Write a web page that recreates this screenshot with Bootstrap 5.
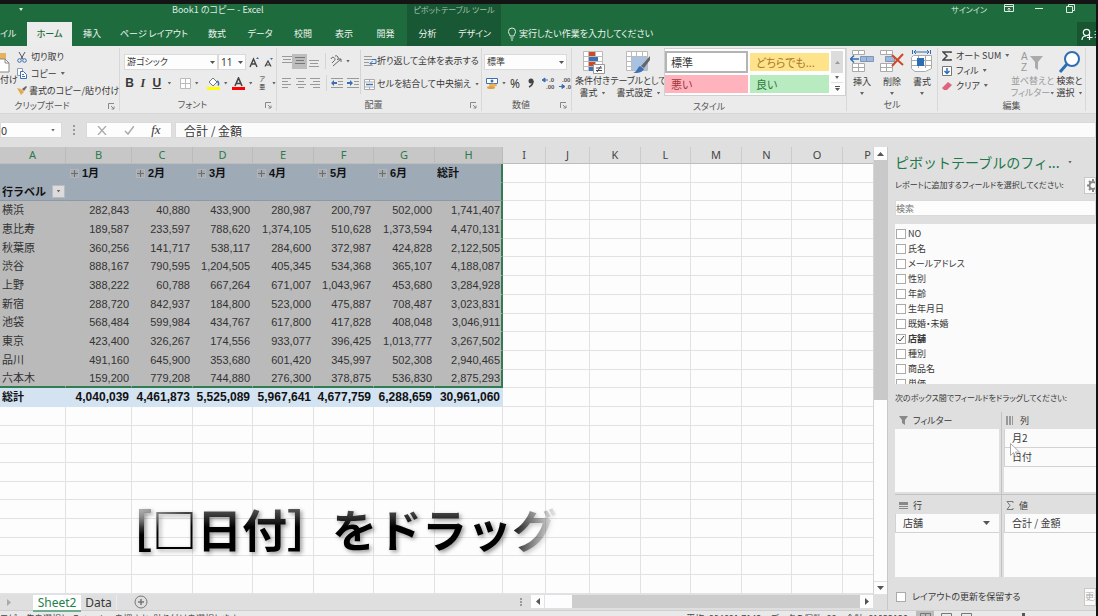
<!DOCTYPE html>
<html lang="ja">
<head>
<meta charset="utf-8">
<meta name="viewport" content="width=device-width, initial-scale=1">
<title>Book1 のコピー - Excel</title>
<link rel="stylesheet" href="https://cdn.jsdelivr.net/npm/bootstrap@5.3.0/dist/css/bootstrap.min.css">
<style>
:root{--ui:"Noto Sans CJK JP",sans-serif}
body{font:9px/12px var(--ui);font-feature-settings:"palt";color:#383838;background:#141414;height:100vh;overflow:hidden}
button,input,select{font:inherit;font-feature-settings:inherit;color:inherit;letter-spacing:inherit}
button{border:0;background:none;padding:0;white-space:nowrap}
svg{display:block;flex:none}
.app{border-top:4px solid #141414;border-right:2px solid #141414;background:#dfdfdf}
.titlebar{height:18px;background:#1e6c3d;color:#dfeae2}
.titlebar .doc{left:172px;top:0}
.titlebar a{font-size:8px}
.ctx{background:#195834;color:#a0c2ac}
.titlebar .ctx{left:407px;width:94px;height:18px;font-size:8px;white-space:nowrap}
.tabsrow{height:24px;background:#1e6c3d;color:#eff5f1}
.tabsrow a{color:inherit;text-decoration:none;text-align:center;line-height:24px}
.tabsrow a.on{background:#ececec;color:#1e6c3d;font-weight:500}
.tabsrow .ctx{color:#eff5f1}
.share{background:#175630;width:19px}
.ribbon{height:68px;background:#ebebeb;border-bottom:1px solid #d6d6d6}
.group{border-right:1px solid #d8d8d8;margin:2px 0;padding-top:2px}
.group .cap{height:13px;line-height:13px;color:#555;text-align:center;flex:none}
.tool{display:flex;align-items:center;justify-content:center}
.box{background:#fdfdfd;border:1px solid #dadada;height:16px;line-height:14px;border-radius:0;padding:0 2px;appearance:none;min-width:0}
select.box{background:#fdfdfd url("data:image/svg+xml,%3Csvg xmlns='http://www.w3.org/2000/svg' width='5' height='3'%3E%3Cpath d='M0 0h5L2.500 3z' fill='%23555'/%3E%3C/svg%3E") no-repeat right 2px center}
.car{width:4px;height:3px;background:#666;clip-path:polygon(0 0,100% 0,50% 100%);flex:none}
.sep{width:1px;height:16px;background:#d5d5d5}
.big{display:flex;flex-direction:column;align-items:center;line-height:12px}
.gallery{background:#fdfdfd;border:1px solid #d0d0d0;grid-template-columns:83px 79px 12px;grid-template-rows:22px 22px;column-gap:2px;font-size:11px}
.sty{text-align:left;padding:0 6px;margin:2px 0;line-height:18px}
.sty.std{border:2px solid #b4b4b4;margin:0;padding:0 4px;background:#fff}
.fbar{height:33px;padding:8px 0 9px;background:#dfdfdf}
.fbar .box{height:16px}
.fbar .fx{background:#fbfbfb;padding-left:8px;font-size:12px;font-feature-settings:normal;margin-left:3px}
.sheet{background:#fdfdfd}
table.cells{table-layout:fixed;width:893px;height:100%;border-collapse:separate;border-spacing:0;font:11px/14px "Liberation Sans",var(--ui);color:#333}
.cells tbody tr{height:18px}
.cells td,.cells th{padding:0 2px;border-right:1px solid #e2e2e2;border-bottom:1px solid #e2e2e2;white-space:nowrap;overflow:hidden;font-weight:400}
.cells thead th{height:17px;background:#dfdfdf;border-color:#cbcbcb;border-bottom-color:#bdbdbd;text-align:center;font:11px/14px "Noto Sans",sans-serif;color:#444}
.cells thead th.sel{background:#c7c7c7;color:#2b7a4b;border-right-color:#bbb}
.cells td.num{text-align:right}
.cells .hd{background:#9eaab5;border-color:#9eaab5;font-weight:700;color:#111;text-align:left}
.cells .hd2{border-bottom-color:#8b9aa9}
.cells .body{background:#bababa;border-color:#bababa;text-align:left}
.cells td.body.num{text-align:right}
.cells .last{border-right:2px solid #2f7d50;padding-right:1px}
.cells .edge{border-bottom:2px solid #2f7d50}
.cells .tot{background:#d3e3f2;border-color:#d3e3f2;color:#111;font-weight:700;text-align:left}
.cells td.tot{font-size:12px;text-align:right}
.plus{display:inline-block;width:9px;height:9px;margin:0 3px 0 2px;border:1px solid #bbb;background:linear-gradient(#555,#555) center/7px 1px no-repeat,linear-gradient(#555,#555) center/1px 7px no-repeat,#aaa;vertical-align:-1px;opacity:.7}
.drop{display:inline-flex;width:13px;height:13px;background:#dcdcdc;border:1px solid #bbb;align-items:center;justify-content:center;float:right;margin-right:-2px}
.caption{left:107px;top:354px;font:700 45px/56px var(--ui);font-feature-settings:normal;white-space:nowrap;color:transparent;background:radial-gradient(ellipse 50px 26px at 30px 8px,#b5b5b5,transparent),linear-gradient(#555 8px,#000 26px);-webkit-background-clip:text;background-clip:text;filter:drop-shadow(2px 2px 2px #0006);-webkit-mask-image:linear-gradient(100deg,#000 400px,transparent 450px);mask-image:linear-gradient(100deg,#000 400px,transparent 450px)}
.vbar{width:14px;background:#c9c9c9;border-left:1px solid #d5d5d5}
.vbar button,.hbar button{background:#fdfdfd;width:13px;height:13px}
.pane{flex:0 0 209px;border-left:1px solid #c8c8c8;background:#dfdfdf;padding:3px 0 0 7px}
.pane h2{font:14px/24px var(--ui);color:#21784a;margin:0;white-space:nowrap}
.hint{font-size:8px;white-space:nowrap}
.gear{width:12px;height:17px;background:#fafafa;border:1px solid #c8c8c8;overflow:hidden}
.fields{background:#fbfbfb;height:160px;overflow:hidden;padding-top:2px}
.fields label,.defer{display:flex;align-items:center;height:15px;gap:2px}
.chk{appearance:none;width:10px;height:10px;margin:0 0 0 1px;border:1px solid #aaa;background:#fff;flex:none}
.chk:checked{background:url("data:image/svg+xml,%3Csvg xmlns='http://www.w3.org/2000/svg' viewBox='0 0 8 8'%3E%3Cpath d='M1 4l2 2 4-5' fill='none' stroke='%23444'/%3E%3C/svg%3E")}
.zones{grid-template-columns:107px 1fr;grid-template-rows:83px 82px}
.zone{border-right:1px solid #c2c2c2;display:flex;flex-direction:column}
.zone .zh{height:17px;display:flex;align-items:center;gap:5px;padding-left:4px}
.zone .zb{background:#fbfbfb;flex:1;margin-right:2px}
.zone:nth-child(even){border-right:0}
.zone:nth-child(even) .zb{margin:0 0 0 2px}
.zone .it{display:flex;align-items:center;justify-content:space-between;width:100%;height:19px;padding:0 9px 0 7px;border-bottom:1px solid #d2d2d2;border-left:1px solid #d2d2d2;font-size:10px}
.zone.upper{border-bottom:1px solid #c2c2c2;padding-bottom:2px}
.zone.lower{padding-top:2px}
.foot{margin-top:11px}
.cursor{left:122px;top:296px}
.tabs{height:16px;background:#dfdfdf;font:12px/15px "Noto Sans",sans-serif}
.tabs .act{background:#fff;color:#1f8049;border-bottom:2px solid #6fae8a}
.hbar{width:342px;background:#cdcdcd;height:13px}
.status{height:6px;overflow:hidden;border-top:1px solid #cfcfcf;background:#e9e9e9;color:#444;line-height:16px}
</style>
</head>
<body>
<div class="app d-flex flex-column vh-100 overflow-hidden">
  <header>
    <div class="titlebar position-relative d-flex justify-content-end">
      <span class="car position-absolute" style="left:19px;top:4px;background:#dfeae2"></span>
      <span class="doc position-absolute">Book1 のコピー - Excel</span>
      <span class="ctx position-absolute text-center">ピボットテーブル ツール</span>
      <div class="d-flex align-items-start gap-3 pe-3">
        <a href="#" class="text-reset text-decoration-none">サインイン</a>
        <button aria-label="リボンの表示オプション"><svg width="12" height="10" fill="none" stroke="#dfeae2"><path d="M1.500.500h9v7h-9zM1.500 2.500h9M6 7V4M4.500 5.500L6 4l1.500 1.500"/></svg></button>
        <button class="ms-1" aria-label="最小化"><svg width="9" height="9" stroke="#dfeae2"><path d="M0 4.500h8"/></svg></button>
        <button class="ms-1 me-1" aria-label="元に戻す"><svg width="12" height="10" fill="none" stroke="#dfeae2"><path d="M2.500 2.500h6v6h-6zM4.500 2.500v-2h6v6h-2"/></svg></button>
      </div>
    </div>
    <nav class="tabsrow d-flex">
      <a href="#" style="width:27px" class="text-start">イル</a>
      <a href="#" class="on" style="width:45px">ホーム</a>
      <a href="#" style="width:40px">挿入</a>
      <a href="#" style="width:84px">ページ レイアウト</a>
      <a href="#" style="width:42px">数式</a>
      <a href="#" style="width:44px">データ</a>
      <a href="#" style="width:42px">校閲</a>
      <a href="#" style="width:40px">表示</a>
      <a href="#" style="width:43px">開発</a>
      <a href="#" class="ctx" style="width:41px">分析</a>
      <a href="#" class="ctx" style="width:53px">デザイン</a>
      <a href="#" class="d-flex align-items-center ms-1"><svg width="14" height="14" fill="none" stroke="#dfeae2"><path d="M5 9C5 7 3.500 7 3.500 4.500a3.500 3.500 0 0 1 7 0C10.500 7 9 7 9 9zM5.500 11h3M6 13h2"/></svg>実行したい作業を入力してください</a>
      <button class="share ms-auto d-flex align-items-center overflow-hidden text-reset ps-1"><svg width="13" height="13" fill="none" stroke="#fff" stroke-width="1.200"><circle cx="5.500" cy="4.500" r="3.200"/><path d="M1 12c0-3 2-4 4-4M8.500 7v5M6 9.500h5.500"/></svg>共有</button>
    </nav>
    <div class="ribbon d-flex">
      <section class="group d-flex flex-column" style="width:120px;padding-top:1px">
        <div class="d-flex flex-fill">
          <button class="big" style="width:17px;align-items:flex-start;padding-top:3px" aria-label="貼り付け"><svg width="12" height="22"><path d="M0 1h6v8H0z" fill="#e8b25c"/><path d="M-1 7h6l4 4v9h-10z" fill="#fff" stroke="#888"/><path d="M5 7v4h4" fill="none" stroke="#888"/></svg>付け</button>
          <div class="d-flex flex-column">
            <button class="tool justify-content-start gap-1" style="height:16px"><svg width="10" height="11" fill="none"><path d="M2 0l4 7M8 0L4 7" stroke="#555"/><circle cx="2.500" cy="8.500" r="1.800" stroke="#3c6fb4"/><circle cx="7.500" cy="8.500" r="1.800" stroke="#3c6fb4"/></svg>切り取り</button>
            <button class="tool justify-content-start gap-1" style="height:17px"><svg width="10" height="11" fill="#fff"><path d="M.500.500h5v7h-5z" stroke="#8a9bb0"/><path d="M3.500 3.500h3l3 3v4h-6z" stroke="#3c6fb4"/><path d="M5 6.500h2M5 8.500h3" stroke="#3c6fb4"/></svg>コピー<i class="car"></i></button>
            <button class="tool justify-content-start" style="height:17px"><svg width="12" height="11"><path d="M0 3l4 1 3 3-3 3z" fill="#e5a84b"/><path d="M5 4l4-3 1 1-3 4z" fill="#666"/></svg>書式のコピー/貼り付け</button>
          </div>
        </div>
        <div class="cap d-flex"><span class="flex-fill pe-4">クリップボード</span><svg class="mt-1 me-1" width="7" height="7" fill="none" stroke="#888"><path d="M.500 6V.500H6M3 3l3 3M6 3.500V6H3.500"/></svg></div>
      </section>
      <section class="group d-flex flex-column" style="width:157px">
        <div class="flex-fill ps-1">
          <div class="d-flex align-items-center mt-1" style="height:16px">
            <select class="box" style="width:94px" aria-label="フォント"><option>游ゴシック</option></select>
            <select class="box" style="width:28px;font:10px 'Noto Sans'" aria-label="サイズ"><option>11</option></select>
            <button class="tool" style="width:17px"><svg width="11" height="11"><path d="M1 10L4.500 2 8 10M2.500 7h4" fill="none" stroke="#444" stroke-width="1.400"/><path d="M7 2l1.500-2L10 2z" fill="#3c6fb4"/></svg></button>
            <button class="tool" style="width:12px"><svg width="10" height="10"><path d="M1 9.500L4 4l3 5.500M2 8h4" fill="none" stroke="#444" stroke-width="1.200"/><path d="M6 1h3L7.500 3z" fill="#3c6fb4"/></svg></button>
          </div>
          <div class="d-flex align-items-center" style="height:26px;font:700 12px 'Liberation Sans'">
            <button class="tool" style="width:12px">B</button>
            <button class="tool fst-italic" style="width:16px;font-family:'Liberation Serif'">I</button>
            <button class="tool text-decoration-underline" style="width:14px">U</button>
            <i class="car ms-1 me-2"></i>
            <button class="tool" style="width:12px"><svg width="11" height="11" fill="#fff" stroke="#bbb"><path d="M.500.500h10v10H.500zM5.500 0v11M0 5.500h11"/></svg></button>
            <i class="car mx-1"></i>
            <button class="tool ms-1" style="width:13px"><svg width="13" height="13"><path d="M6 1l4 4-4 4-4-4z" fill="#fff" stroke="#777"/><path d="M10 4c2 1 2 3 1 4.500" stroke="#3c6fb4" stroke-width="1.500" fill="none"/><path d="M0 10h13v3H0z" fill="#ff0"/></svg></button>
            <i class="car mx-1"></i>
            <button class="tool" style="width:13px"><svg width="13" height="13"><path d="M3 9l3.500-8L10 9M4 6.500h5" fill="none" stroke="#444" stroke-width="1.600"/><path d="M0 10h13v3H0z" fill="#f00"/></svg></button>
            <i class="car mx-1"></i>
            <button class="tool" style="width:12px;font:6px/8px var(--ui)">ア<br>亜</button>
            <i class="car ms-1"></i>
          </div>
        </div>
        <div class="cap d-flex"><span class="flex-fill">フォント</span><svg class="mt-1 me-1" width="7" height="7" fill="none" stroke="#888"><path d="M.500 6V.500H6M3 3l3 3M6 3.500V6H3.500"/></svg></div>
      </section>
      <section class="group d-flex flex-column" style="width:205px">
        <div class="d-flex flex-fill ps-1">
          <div style="width:79px">
            <div class="d-flex align-items-center" style="height:20px;margin-top:1px">
              <button class="tool" style="width:11px" aria-label="上揃え"><svg width="10" height="12" stroke="#999"><path d="M0 1.500h10M1 4.500h8M0 7.500h10"/></svg></button>
              <button class="tool" style="width:15px;height:15px;background:#bdbdbd" aria-label="上下中央"><svg width="10" height="12" stroke="#777"><path d="M0 2.500h10M1 5.500h8M0 8.500h10"/></svg></button>
              <button class="tool" style="width:14px" aria-label="下揃え"><svg width="10" height="12" stroke="#999"><path d="M0 5.500h10M1 8.500h8M0 11.500h10"/></svg></button>
              <i class="sep mx-1"></i>
              <button class="tool" style="width:12px" aria-label="方向"><svg width="12" height="12" fill="none" stroke="#666"><path d="M1 4a2 2 0 1 1 3 2L2 8M5 1a2 2 0 1 1 2 4M3 11l8-7M8 4h3v3"/></svg></button><i class="car ms-1"></i>
            </div>
            <div class="d-flex align-items-center" style="height:24px">
              <button class="tool" style="width:12px" aria-label="左揃え"><svg width="10" height="10" stroke="#999"><path d="M0 .500h9M0 3.500h6M0 6.500h9M0 9.500h6"/></svg></button>
              <button class="tool" style="width:15px" aria-label="中央揃え"><svg width="10" height="10" stroke="#999"><path d="M0 .500h10M2 3.500h6M0 6.500h10M2 9.500h6"/></svg></button>
              <button class="tool" style="width:14px" aria-label="右揃え"><svg width="10" height="10" stroke="#999"><path d="M0 .500h10M3 3.500h7M0 6.500h10M3 9.500h7"/></svg></button>
              <i class="sep mx-1"></i>
              <button class="tool" style="width:12px" aria-label="インデント減"><svg width="12" height="10"><path d="M0 .500h12M7 3.500h5M7 6.500h5M0 9.500h12" stroke="#999"/><path d="M0 5l3-3v2h3v2H3v2z" fill="#3c6fb4"/></svg></button>
              <button class="tool ms-1" style="width:12px" aria-label="インデント増"><svg width="12" height="10"><path d="M0 .500h12M7 3.500h5M7 6.500h5M0 9.500h12" stroke="#999"/><path d="M6 5L3 2v2H0v2h3v2z" fill="#3c6fb4"/></svg></button>
            </div>
          </div>
          <i class="sep" style="height:44px"></i>
          <div style="padding-left:3px">
            <button class="tool" style="height:20px;margin-top:1px"><svg width="13" height="11" fill="none"><path d="M0 .500h8M0 3.500h8M0 6.500h5M0 9.500h7" stroke="#999"/><path d="M8 3.500h4v4H6M8.500 5L6 7.500 8.500 10" stroke="#3c6fb4"/></svg>折り返して全体を表示する</button>
            <button class="tool" style="height:26px"><svg width="13" height="11"><path d="M.500.500h10v10H.500zM.500 3h10M.500 8h10M5.500 0v3M5.500 8v3" fill="#fff" stroke="#aaa"/><path d="M2 5.500h7" stroke="#3c6fb4" stroke-width="1.500"/></svg>セルを結合して中央揃え<i class="car ms-1"></i></button>
          </div>
        </div>
        <div class="cap d-flex"><span class="flex-fill">配置</span><svg class="mt-1 me-1" width="7" height="7" fill="none" stroke="#888"><path d="M.500 6V.500H6M3 3l3 3M6 3.500V6H3.500"/></svg></div>
      </section>
      <section class="group d-flex flex-column" style="width:90px">
        <div class="flex-fill ps-1">
          <select class="box d-block mt-1" style="width:83px;margin-left:-2px" aria-label="表示形式"><option>標準</option></select>
          <div class="d-flex align-items-center" style="height:26px">
            <button aria-label="通貨"><svg width="12" height="11"><path d="M.500.500h11v5H.500z" fill="#fff" stroke="#3c6fb4"/><circle cx="6" cy="3" r="1.500" fill="#3c6fb4"/><ellipse cx="7" cy="7" rx="4" ry="1.500" fill="#e8b25c"/><ellipse cx="5" cy="9.500" rx="4" ry="1.500" fill="#e0a040"/></svg></button><i class="car ms-1"></i>
            <button class="ms-1" style="font:12px 'Noto Sans'">%</button>
            <button class="tool ms-2" aria-label="桁区切り"><svg width="6" height="10"><circle cx="3" cy="3" r="2.500" fill="#444"/><path d="M5 3q0 4-4 6" stroke="#444" stroke-width="1.500" fill="none"/></svg></button>
            <i class="sep mx-1"></i>
            <button aria-label="小数点以下を増やす"><svg width="13" height="12" font-family="Liberation Sans" font-size="6" font-weight="bold" fill="#555"><path d="M0 3l3-2v4zM3 3h3" fill="#3c6fb4" stroke="#3c6fb4"/><text x="7" y="5">.0</text><text x="4" y="12">.00</text></svg></button>
            <button class="ms-1" aria-label="小数点以下を減らす"><svg width="13" height="12" font-family="Liberation Sans" font-size="6" font-weight="bold" fill="#555"><path d="M6 9.500l-3-2v4zM0 9.500h3" fill="#3c6fb4" stroke="#3c6fb4"/><text x="3" y="5">.00</text><text x="7" y="12">.0</text></svg></button>
          </div>
        </div>
        <div class="cap d-flex"><span class="flex-fill">数値</span><svg class="mt-1 me-1" width="7" height="7" fill="none" stroke="#888"><path d="M.500 6V.500H6M3 3l3 3M6 3.500V6H3.500"/></svg></div>
      </section>
      <section class="group d-flex flex-column" style="width:275px;padding-top:0">
        <div class="d-flex flex-fill">
          <button class="big" style="width:41px;padding-top:3px"><svg width="24" height="24"><path d="M2.500.500h19v19h-19zM2 5.500h19M2 10.500h19M2 15.500h19M7.500 0v20M14.500 0v20" fill="#fff" stroke="#bbb"/><path d="M8 1h6v4H8zM8 11h6v4H8z" fill="#d24726"/><path d="M8 6h9v4H8zM8 16h4v4H8z" fill="#3c6fb4"/><path d="M12.500 13.500h11v9h-11z" fill="#fff" stroke="#999"/><path d="M15 17h6M15 19.500h6M20 15l-4 6" stroke="#444"/></svg>条件付き<span class="d-flex align-items-center gap-1">書式<i class="car"></i></span></button>
          <button class="big" style="width:51px;padding-top:3px"><svg width="25" height="24"><path d="M.500.500h21v19H.500zM0 5.500h21M0 10.500h21M0 15.500h21M5.500 0v20M10.500 0v20M16.500 0v20" fill="#fff" stroke="#bbb"/><path d="M6 6h15v13H6z" fill="#a9c2e2"/><path d="M24 5l-9 10 3 2 6-8z" fill="#666"/><path d="M14 15l4 3c-2 4-6 4-11 4 4-1 4-5 7-7z" fill="#3c6fb4"/></svg>テーブルとして<span class="d-flex align-items-center gap-1">書式設定<i class="car"></i></span></button>
          <div class="gallery d-grid mb-1" style="width:182px;padding-top:2px">
            <button class="sty std">標準</button>
            <button class="sty" style="background:#ffe38a;color:#a5792a">どちらでも...</button>
            <button class="tool" style="background:#dcdcdc"><svg width="5" height="3" fill="#999"><path d="M0 3h5L2.500 0z"/></svg></button>
            <button class="sty" style="background:#ffb3bd;color:#a3393e">悪い</button>
            <button class="sty" style="background:#b8ecc0;color:#2f7a3d">良い</button>
            <div class="d-flex flex-column"><button class="tool flex-fill border-bottom"><i class="car"></i></button><button class="tool flex-fill"><svg width="5" height="6"><path d="M0 .500h5" stroke="#555"/><path d="M0 2h5L2.500 5z" fill="#555"/></svg></button></div>
          </div>
        </div>
        <div class="cap">スタイル</div>
      </section>
      <section class="group d-flex flex-column" style="width:91px">
        <div class="d-flex flex-fill justify-content-around">
          <button class="big" style="width:29px"><svg class="mb-1" width="24" height="22"><path d="M2.500.500h12v4h-12zM2.500 13.500h12v8h-12zM8.500 0v5M8.500 13v9M2 17.500h12" fill="#fff" stroke="#aaa"/><path d="M10.500 6.500h13v5h-13zM16.500 6.500v5" fill="#9fb9dc" stroke="#7f96b5"/><path d="M0 9h9M4 5.500L.500 9 4 12.500" fill="none" stroke="#2e6db4" stroke-width="1.500"/></svg>挿入<i class="car mt-1"></i></button>
          <button class="big" style="width:29px"><svg class="mb-1" width="24" height="22"><path d="M.500.500h12v4H.500zM.500 13.500h12v8H.500zM6.500 0v5M6.500 13v9M0 17.500h12" fill="#fff" stroke="#aaa"/><path d="M5.500 6.500h9v5h-9z" fill="#9fb9dc" stroke="#7f96b5"/><path d="M12 5l11 10M23 4L12 16" stroke="#d24726" stroke-width="2"/></svg>削除<i class="car mt-1"></i></button>
          <button class="big" style="width:29px"><svg class="mb-1" width="22" height="22"><path d="M2.500 5.500h18v13l-6 3H4l-3.500-3v-11zM7.500 5v13M14.500 5v13M1 10.500h20M1 15.500h20" fill="#fff" stroke="#aaa"/><path d="M6 8h7v8H6z" fill="#2e6db4"/><path d="M3 2h15M5 0L3 2l2 2M16 0l2 2-2 2M1.500 0v4M19.500 0v4" fill="none" stroke="#2e6db4"/></svg>書式<i class="car mt-1"></i></button>
        </div>
        <div class="cap">セル</div>
      </section>
      <section class="group d-flex flex-column" style="width:148px;padding-top:0">
        <div class="d-flex flex-fill">
          <div class="ps-1" style="width:73px">
            <button class="tool gap-1" style="height:15px"><svg width="10" height="10" fill="none" stroke="#444" stroke-width="1.500"><path d="M9 2V1H1l4 4-4 4h8V8"/></svg>オート SUM<i class="car"></i></button>
            <button class="tool gap-1" style="height:15px"><svg width="10" height="10"><path d="M.500.500h9v9h-9z" fill="#fff" stroke="#777"/><path d="M5 2v5M2.500 5L5 7.500 7.500 5" fill="none" stroke="#2e6db4" stroke-width="1.500"/></svg>フィル<i class="car"></i></button>
            <button class="tool gap-1" style="height:15px"><svg width="10" height="10"><path d="M6 1l4 3-5 5H2L0 7z" fill="#e0627c"/></svg>クリア<i class="car"></i></button>
          </div>
          <button class="big" style="width:43px;color:#999;padding-top:3px"><svg width="24" height="24"><text x="0" y="9" font-family="Liberation Sans" font-size="10" fill="#999">A</text><text x="0" y="20" font-family="Liberation Sans" font-size="10" fill="#999">Z</text><path d="M9 5h13l-5 6v8l-3-2v-6z" fill="#aaa"/></svg>並べ替えと<span class="d-flex align-items-center">フィルター<i class="car"></i></span></button>
          <button class="big" style="width:31px;padding-top:3px"><svg width="24" height="24" fill="none" stroke="#2e6db4"><circle cx="14" cy="8" r="7" fill="#fff" stroke-width="2"/><path d="M9 13l-7 8" stroke-width="3"/></svg>検索と<span class="d-flex align-items-center gap-1">選択<i class="car"></i></span></button>
        </div>
        <div class="cap">編集</div>
      </section>
    </div>
  </header>

  <div class="fbar d-flex align-items-center">
    <input class="box border-end-0" style="width:45px;padding-left:0;font-size:11px" value="0" aria-label="名前ボックス"><button class="box tool" style="width:17px;border-left:0" aria-label="名前の一覧"><i class="car"></i></button>
    <svg class="mx-2" width="8" height="10" fill="#999"><path d="M3 0h2v2H3zM3 4h2v2H3zM3 8h2v2H3z"/></svg>
    <div class="box d-flex align-items-center justify-content-around" style="width:86px">
      <button aria-label="キャンセル"><svg width="10" height="9" stroke="#aaa" stroke-width="1.300"><path d="M1 0l8 9M9 0L1 9"/></svg></button>
      <button aria-label="入力"><svg width="10" height="9" fill="none" stroke="#aaa" stroke-width="1.500"><path d="M1 5l3 3 6-8"/></svg></button>
      <button style="font:italic 13px/14px 'Liberation Serif'">fx</button>
    </div>
    <input class="box fx flex-fill" value="合計 / 金額" aria-label="数式">
  </div>

  <div class="d-flex flex-fill position-relative" style="min-height:0">
    <div class="d-flex flex-column flex-fill" style="min-width:0">
      <main class="d-flex flex-fill" style="min-height:0">
        <div class="sheet flex-fill overflow-hidden position-relative">
          <table class="cells"><colgroup></colgroup><thead></thead><tbody></tbody></table>
          <div class="caption position-absolute">［□日付］をドラッグ</div>
        </div>
        <div class="vbar d-flex flex-column">
          <button class="tool" aria-label="上へ"><svg width="7" height="4" fill="#555"><path d="M0 4h7L3.500 0z"/></svg></button>
          <div style="flex:240"></div>
          <div style="flex:181;background:#fdfdfd"></div>
          <button class="tool border-top" aria-label="下へ"><svg width="7" height="4" fill="#555"><path d="M0 0h7L3.500 4z"/></svg></button>
        </div>
      </main>
      <div class="tabs d-flex align-items-start border-top">
        <svg style="width:33px" height="14" fill="#aaa"><path d="M7 4v7l4-3.500z"/></svg>
        <button class="act" style="width:48px">Sheet2</button>
        <button class="border-end border-secondary-subtle" style="width:36px">Data</button>
        <button class="ms-3" aria-label="新しいシート"><svg width="16" height="14" fill="none" stroke="#777"><circle cx="8" cy="7" r="6"/><path d="M8 4v6M5 7h6" stroke-width="1.500"/></svg></button>
        <svg class="ms-auto me-1" width="4" height="14" fill="#999"><path d="M1 3h2v2H1zM1 6h2v2H1zM1 9h2v2H1z"/></svg>
        <div class="hbar d-flex ms-1" style="margin-right:14px">
          <button class="tool" aria-label="左へ"><svg width="4" height="7" fill="#555"><path d="M4 0v7L0 3.500z"/></svg></button>
          <div class="border-start" style="width:28px;background:#fdfdfd"></div>
          <button class="tool ms-auto" aria-label="右へ"><svg width="4" height="7" fill="#555"><path d="M0 0v7l4-3.500z"/></svg></button>
        </div>
      </div>
    </div>
    <aside class="pane position-relative d-flex flex-column">
      <div class="d-flex align-items-center justify-content-between"><h2>ピボットテーブルのフィ...</h2><i class="car me-4"></i></div>
      <div class="d-flex align-items-center justify-content-between" style="height:20px;margin-top:1px"><span class="hint">レポートに追加するフィールドを選択してください:</span><button class="gear" aria-label="ツール"><svg width="14" height="15" fill="none" stroke="#888"><circle cx="8" cy="7.500" r="3.500" stroke-width="2"/><path d="M8 1v2M8 12v2M2 7.500h2M4 3l1.500 1.500M4 12l1.500-1.500" stroke-width="2"/></svg></button></div>
      <input class="box w-100 px-0" style="margin-top:5px" placeholder="検索" aria-label="検索">
      <div class="fields mt-2">
        <label><input type="checkbox" class="chk">NO</label>
        <label><input type="checkbox" class="chk">氏名</label>
        <label><input type="checkbox" class="chk">メールアドレス</label>
        <label><input type="checkbox" class="chk">性別</label>
        <label><input type="checkbox" class="chk">年齢</label>
        <label><input type="checkbox" class="chk">生年月日</label>
        <label><input type="checkbox" class="chk">既婚・未婚</label>
        <label class="fw-bold"><input type="checkbox" class="chk" checked>店舗</label>
        <label><input type="checkbox" class="chk">種別</label>
        <label><input type="checkbox" class="chk">商品名</label>
        <label><input type="checkbox" class="chk">単価</label>
      </div>
      <div class="hint mt-2">次のボックス間でフィールドをドラッグしてください:</div>
      <div class="zones d-grid mt-2">
        <div class="zone upper"><div class="zh"><svg width="9" height="9" fill="#888"><path d="M0 0h9L6 4v5L3 7V4z"/></svg>フィルター</div><div class="zb"></div></div>
        <div class="zone upper"><div class="zh"><svg width="9" height="9" fill="#999"><path d="M0 0h2v9H0zM3 0h2v9H3zM6 0h1v9H6z"/></svg>列</div><div class="zb"><button class="it">月2</button><button class="it">日付</button></div></div>
        <div class="zone lower"><div class="zh"><svg width="9" height="8" fill="#888"><path d="M0 0h9v3H0zM0 4h9v1H0zM0 6h9v1H0z"/></svg>行</div><div class="zb"><button class="it">店舗<svg width="7" height="4" fill="#555"><path d="M0 0h7L3.500 4z"/></svg></button></div></div>
        <div class="zone lower"><div class="zh"><svg width="8" height="9" fill="none" stroke="#777"><path d="M7 2V.500H1l3 4-3 4h6V7"/></svg>値</div><div class="zb"><button class="it">合計 / 金額</button></div></div>
      </div>
      <div class="foot d-flex align-items-center justify-content-between"><label class="defer"><input type="checkbox" class="chk me-1">レイアウトの更新を保留する</label><button class="gear text-start" style="height:18px;color:#aaa">更新</button></div>
      <svg class="cursor position-absolute" width="10" height="15"><path d="M.500.500v12l3-3 2 4.500 2-1-2-4H9.500z" fill="#fff" stroke="#aaa"/></svg>
    </aside>
  </div>
  <footer class="status d-flex text-nowrap">
    <span>コピー先を選択し、Enter キーを押すか、貼り付けを選択します</span>
    <span class="ms-auto">平均: 884601.7143　データの個数: 88　合計: 61922120</span>
    <svg class="ms-2" width="180" height="6"><path d="M0 0h18v6H0z" fill="#bbb"/><path d="M4.500 6V2.500h10V6M9.500 2.500V6M25.500 6V2.500h10V6M45.500 6V2.500h10V6" fill="none" stroke="#777"/><path d="M106 2h3v4h-3z" fill="#555"/></svg>
  </footer>
</div>
<script src="https://cdn.jsdelivr.net/npm/bootstrap@5.3.0/dist/js/bootstrap.bundle.min.js"></script>
<script>
const widths=[66,66,61,60,61,60,61,68,43,44,51,50,51,50,51,50];
const letters='ABCDEFGHIJKLMNOP'.split('');
const rows=[
 ['横浜','282,843','40,880','433,900','280,987','200,797','502,000','1,741,407'],
 ['恵比寿','189,587','233,597','788,620','1,374,105','510,628','1,373,594','4,470,131'],
 ['秋葉原','360,256','141,717','538,117','284,600','372,987','424,828','2,122,505'],
 ['渋谷','888,167','790,595','1,204,505','405,345','534,368','365,107','4,188,087'],
 ['上野','388,222','60,788','667,264','671,007','1,043,967','453,680','3,284,928'],
 ['新宿','288,720','842,937','184,800','523,000','475,887','708,487','3,023,831'],
 ['池袋','568,484','599,984','434,767','617,800','417,828','408,048','3,046,911'],
 ['東京','423,400','326,267','174,556','933,077','396,425','1,013,777','3,267,502'],
 ['品川','491,160','645,900','353,680','601,420','345,997','502,308','2,940,465'],
 ['六本木','159,200','779,208','744,880','276,300','378,875','536,830','2,875,293']];
const total=['総計','4,040,039','4,461,873','5,525,089','5,967,641','4,677,759','6,288,659','30,961,060'];
const blanks=n=>'<td></td>'.repeat(n);
document.querySelector('.cells colgroup').innerHTML=widths.map(w=>`<col style="width:${w}px">`).join('');
document.querySelector('.cells thead').innerHTML='<tr>'+letters.map((l,i)=>`<th class="${i<8?'sel':''}">${l}</th>`).join('')+'</tr>';
let h='<tr><th class="hd"></th>'+[1,2,3,4,5,6].map(m=>`<th class="hd"><i class="plus"></i>${m}月</th>`).join('')+'<th class="hd last">総計</th>'+blanks(8)+'</tr>';
h+='<tr><th class="hd hd2">行ラベル<button class="drop" aria-label="絞り込み"><i class="car"></i></button></th>'+'<td class="hd hd2"></td>'.repeat(6)+'<td class="hd hd2 last"></td>'+blanks(8)+'</tr>';
rows.forEach((r,n)=>{const e=n===rows.length-1?' edge':'';
 h+='<tr>'+r.map((v,i)=>i?`<td class="num body${e}${i===7?' last':''}">${v}</td>`:`<th class="body${e}">${v}</th>`).join('')+blanks(8)+'</tr>';});
h+='<tr>'+total.map((v,i)=>i?`<td class="tot">${v}</td>`:`<th class="tot">${v}</th>`).join('')+blanks(8)+'</tr>';
h+=('<tr>'+blanks(16)+'</tr>').repeat(10);
document.querySelector('.cells tbody').innerHTML=h;
</script>
</body>
</html>
